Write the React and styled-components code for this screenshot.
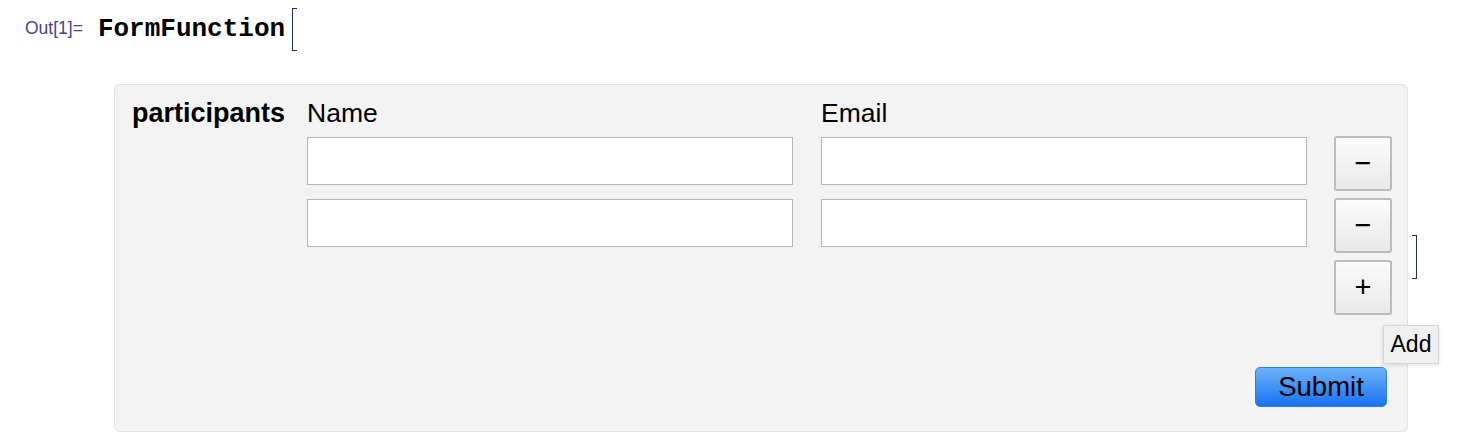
import React from "react";
import styled, { createGlobalStyle } from "styled-components";

const GlobalStyle = createGlobalStyle`
    body {
        margin: 0;
        background: #ffffff;
        font-family: "Liberation Sans", Arial, sans-serif;
    }
`;

function App() {
    const rows = [1, 2];
    return (
        <>
            <GlobalStyle />
            <Header>
                <OutLabel>Out[1]=</OutLabel>
                <FuncName>FormFunction</FuncName>
                <OpenBracket />
            </Header>
            <Panel>
                <Grid>
                    <FieldLabel>participants</FieldLabel>
                    <ColLabel>Name</ColLabel>
                    <ColLabel>Email</ColLabel>
                    <span />
                    {rows.map((r) => (
                        <React.Fragment key={r}>
                            <Field type="text" $col={2} />
                            <Field type="text" $col={3} />
                            <SquareButton>−</SquareButton>
                        </React.Fragment>
                    ))}
                    <AddWrap>
                        <SquareButton>+</SquareButton>
                        <Tooltip>Add</Tooltip>
                    </AddWrap>
                </Grid>
                <Footer>
                    <SubmitButton>Submit</SubmitButton>
                </Footer>
                <CellBracket />
            </Panel>
        </>
    );
}

export default App;

const Header = styled.div`
    display: flex;
    align-items: center;
    height: 58px;
    padding-left: 25px;
`;
const OutLabel = styled.span`
    font-family: "Liberation Sans", Arial, sans-serif;
    font-size: 17.5px;
    line-height: 17.5px;
    color: #44458c;
    margin-right: 15px;
`;
const FuncName = styled.span`
    font-family: "Liberation Mono", "Courier New", monospace;
    font-weight: bold;
    font-size: 26px;
    line-height: 26px;
    color: #000;
`;
const OpenBracket = styled.span`
    display: inline-block;
    width: 4px;
    height: 41px;
    margin-left: 7px;
    border: 1px solid #1d3550;
    border-right: none;
`;
const Panel = styled.div`
    position: relative;
    margin: 26px 0 0 114px;
    width: 1294px;
    box-sizing: border-box;
    height: 348px;
    padding: 13px 15px 24px 17px;
    background: #f3f3f3;
    border: 1px solid #e2e2e2;
    border-radius: 6px;
`;
const Grid = styled.div`
    display: grid;
    grid-template-columns: 175px 514px 513px 58px;
    grid-template-rows: 31px 55px 55px 55px;
    row-gap: 7px;
`;
const FieldLabel = styled.div`
    grid-row: 1 / span 4;
    grid-column: 1;
    font-size: 27px;
    line-height: 30px;
    font-weight: bold;
    color: #000;
`;
const ColLabel = styled.div`
    font-size: 26.5px;
    line-height: 30px;
    color: #000;
`;
const Field = styled.input`
    grid-column: ${(p) => p.$col};
    width: 486px;
    height: 48px;
    margin: 1px 0 0 0;
    padding: 0 8px;
    box-sizing: border-box;
    border: 1px solid #b6b6b6;
    border-radius: 0;
    background: #fff;
    outline: none;
`;
const SquareButton = styled.button`
    width: 58px;
    height: 55px;
    padding: 0;
    box-sizing: border-box;
    border: 2px solid #bcbcbc;
    border-radius: 3px;
    background: linear-gradient(#fbfbfb, #e9e9e9);
    font-family: "Liberation Sans", Arial, sans-serif;
    font-size: 29px;
    line-height: 1;
    color: #000;
`;
const AddWrap = styled.div`
    position: relative;
    grid-column: 4;
    grid-row: 4;
`;
const Tooltip = styled.div`
    position: absolute;
    left: 49px;
    top: 65px;
    width: 56px;
    height: 39px;
    box-sizing: border-box;
    display: flex;
    align-items: center;
    justify-content: center;
    background: #f0f0f0;
    border: 1px solid #d6d6d6;
    box-shadow: 0 1px 4px rgba(0, 0, 0, 0.12);
    font-size: 23px;
    color: #000;
`;
const Footer = styled.div`
    display: flex;
    justify-content: flex-end;
    margin-top: 52px;
    padding-right: 5px;
`;
const SubmitButton = styled.button`
    width: 132px;
    height: 40px;
    padding: 0;
    border: 1px solid #2d7fe6;
    border-radius: 5px;
    background: linear-gradient(#6cb2fa, #1872f2);
    font-family: "Liberation Sans", Arial, sans-serif;
    font-size: 27.5px;
    line-height: 1;
    color: #000;
`;
const CellBracket = styled.div`
    position: absolute;
    left: 1297px;
    top: 150px;
    width: 4px;
    height: 42px;
    border: 1px solid #1d3550;
    border-left: none;
`;
